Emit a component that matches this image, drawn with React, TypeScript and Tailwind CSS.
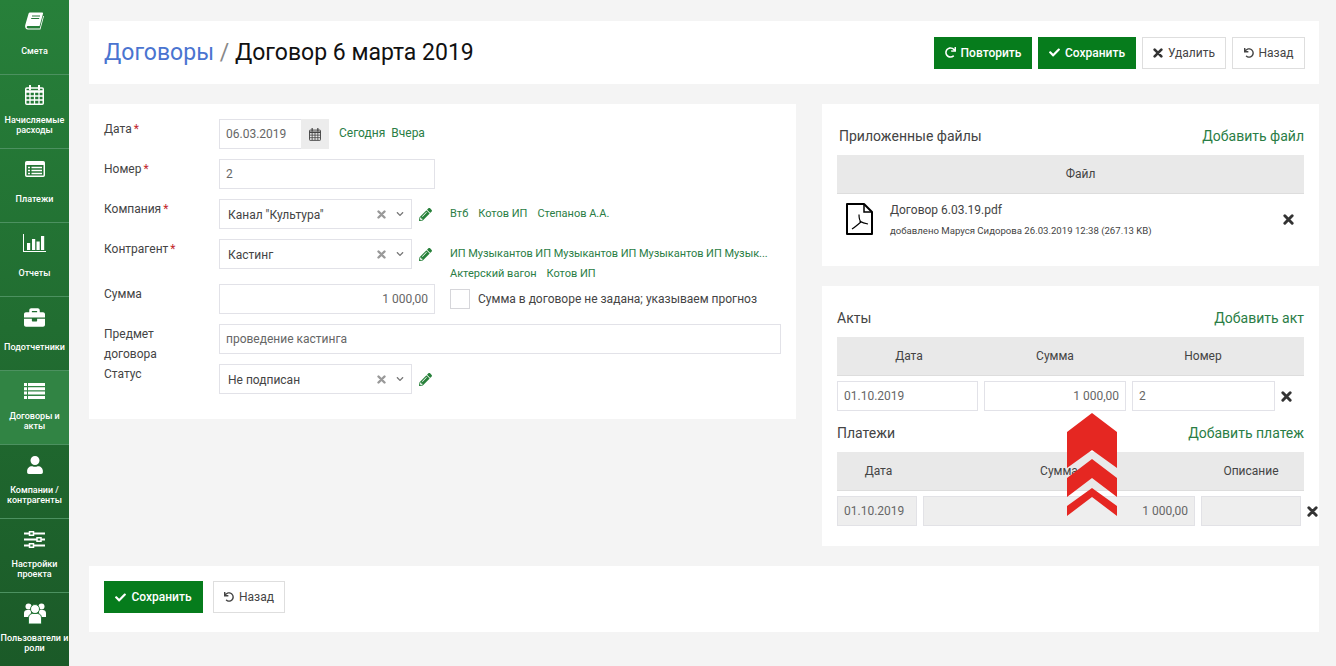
import React from 'react';
import { FaBriefcase, FaUser, FaRedo, FaCheck, FaUndo, FaPencilAlt, FaChevronDown } from 'react-icons/fa';

const GREEN = '#26783a';

function BookIcon() {
    return (
        <svg width="19" height="18" viewBox="0 0 19 18" fill="white">
            <path d="M5 0.5H17.2C18 0.5 18.2 1 18 1.8L14.6 14H3.2C1.2 14 1.2 16.4 3.2 16.4H14.8L18.2 4H19L15.4 17.6H3C0.4 17.6 -0.4 15 0.4 12.6L3.6 1.6C3.8 0.9 4.3 0.5 5 0.5Z" />
            <path d="M7 4H15M6.2 6.5H14.2" stroke={GREEN} strokeWidth="1" />
        </svg>
    );
}

function CalendarIcon({ size = 19, color = 'white' }: { size?: number; color?: string }) {
    return (
        <svg width={size} height={size + 1} viewBox="0 0 19 20" fill="none" stroke={color}>
            <rect x="0.75" y="3" width="17.5" height="16.25" rx="1" strokeWidth="1.5" />
            <path d="M0.5 6.5H18.5" strokeWidth="2.5" />
            <path d="M5 7V19M9.5 7V19M14 7V19M1 11H18M1 15H18" strokeWidth="1.3" />
            <path d="M5 0.5V4.5M14 0.5V4.5" strokeWidth="2" strokeLinecap="round" />
        </svg>
    );
}

function ListAltIcon() {
    return (
        <svg width="20" height="16" viewBox="0 0 20 16" fill="none" stroke="white">
            <rect x="0.75" y="0.75" width="18.5" height="14.5" rx="1" strokeWidth="1.5" />
            <path d="M1 2.5H19" strokeWidth="3" />
            <path d="M6.5 6.5H17M6.5 9.5H17M6.5 12.5H17M3 6.5H5M3 9.5H5M3 12.5H5" strokeWidth="1.4" />
        </svg>
    );
}

function ChartIcon() {
    return (
        <svg width="23" height="18" viewBox="0 0 23 18" fill="white">
            <path d="M0 0H1V17H23V18H0Z" />
            <rect x="4" y="9" width="3.2" height="7" />
            <rect x="9" y="5" width="3.2" height="11" />
            <rect x="13.5" y="7.5" width="3.2" height="8.5" />
            <rect x="18" y="2" width="3.2" height="14" />
        </svg>
    );
}

function ListIcon() {
    return (
        <svg width="21" height="16" viewBox="0 0 21 16" fill="white">
            <path d="M0 0H3V3H0ZM4 0H21V3H4ZM0 4.3H3V7.3H0ZM4 4.3H21V7.3H4ZM0 8.6H3V11.6H0ZM4 8.6H21V11.6H4ZM0 13H3V16H0ZM4 13H21V16H4Z" />
        </svg>
    );
}

function SlidersIcon() {
    return (
        <svg width="21" height="17" viewBox="0 0 21 17">
            <path d="M0 2.5H21M0 8.5H21M0 14.5H21" stroke="white" strokeWidth="2" />
            <rect x="5.5" y="0.75" width="4" height="3.5" fill={GREEN} stroke="white" strokeWidth="1.5" />
            <rect x="13" y="6.75" width="4" height="3.5" fill={GREEN} stroke="white" strokeWidth="1.5" />
            <rect x="5.5" y="12.75" width="4" height="3.5" fill={GREEN} stroke="white" strokeWidth="1.5" />
        </svg>
    );
}

function UsersIcon() {
    return (
        <svg width="22" height="21" viewBox="0 0 22 21" fill="white">
            <circle cx="4.5" cy="3.5" r="3" />
            <circle cx="17.5" cy="3.5" r="3" />
            <path d="M0 13V10C0 8 1.5 7 3 7H7V14H0ZM22 13V10C22 8 20.5 7 19 7H15V14H22Z" />
            <circle cx="11" cy="6" r="4.5" stroke={GREEN} strokeWidth="1" />
            <path d="M4.5 21V15C4.5 12 6.5 10.5 8.5 10.5H13.5C15.5 10.5 17.5 12 17.5 15V21Z" stroke={GREEN} strokeWidth="1" />
        </svg>
    );
}

function PdfIcon() {
    return (
        <svg width="27" height="32" viewBox="0 0 27 32" fill="none" stroke="black">
            <path d="M1 1H18L26 9V31H1Z" strokeWidth="2" strokeLinejoin="round" />
            <path d="M18 1V9H26" strokeWidth="1.5" />
            <path d="M13 11.5C13 15 14 18 15 19C13 20.5 9 24 6 26M13.5 18C16 19.5 19 20.5 22 21" strokeWidth="1.2" />
        </svg>
    );
}

function CrossIcon({ size = 11, color = '#333' }: { size?: number; color?: string }) {
    return (
        <svg width={size} height={size} viewBox="0 0 12 12" stroke={color} strokeWidth="3.2" strokeLinecap="round">
            <path d="M2 2L10 10M10 2L2 10" />
        </svg>
    );
}

const menu = [
    { icon: <BookIcon />, label: 'Смета' },
    { icon: <CalendarIcon />, label: 'Начисляемые расходы' },
    { icon: <ListAltIcon />, label: 'Платежи' },
    { icon: <ChartIcon />, label: 'Отчеты' },
    { icon: <FaBriefcase className="text-[21px]" />, label: 'Подотчетники' },
    { icon: <ListIcon />, label: 'Договоры и акты', active: true },
    { icon: <FaUser className="text-[18px]" />, label: 'Компании / контрагенты' },
    { icon: <SlidersIcon />, label: 'Настройки проекта' },
    { icon: <UsersIcon />, label: 'Пользователи и роли' },
];

function Sidebar() {
    return (
        <aside className="w-[69px] shrink-0 h-full pt-[1px] bg-gradient-to-b from-[#27803a] to-[#1b5a28] text-white">
            {menu.map((item) => (
                <div
                    key={item.label}
                    className={`h-[74px] border-b border-[#4c9160] flex flex-col items-center pt-[8px] ${item.active ? 'bg-[#318444]' : ''}`}
                >
                    <div className="h-[24px] flex items-center justify-center">{item.icon}</div>
                    <div className="h-[34px] mt-[1px] flex items-center justify-center text-center text-[9px] leading-[10px] font-medium -mx-[2px]">
                        {item.label}
                    </div>
                </div>
            ))}
        </aside>
    );
}

function Button({ icon, label, primary, className = '' }: { icon: React.ReactNode; label: string; primary?: boolean; className?: string }) {
    return (
        <button
            className={`h-[32px] flex items-center justify-center gap-[5px] text-[12px] ${primary ? 'bg-[#067c1c] text-white font-medium' : 'bg-white border border-[#dedede] text-[#444]'} ${className}`}
        >
            {icon}
            {label}
        </button>
    );
}

function Label({ text, required }: { text: React.ReactNode; required?: boolean }) {
    return (
        <div className="w-[115px] shrink-0 text-[12px] leading-[20px] text-[#444]">
            {text}
            {required && <span className="text-[#c2272d] ml-[2px]">*</span>}
        </div>
    );
}

function Field({ value, className = '', right, disabled }: { value?: string; className?: string; right?: boolean; disabled?: boolean }) {
    return (
        <div
            className={`h-[30px] border flex items-center px-[6px] text-[12px] text-[#666] ${disabled ? 'bg-[#eee] border-[#e2e2e6]' : 'bg-white border-[#e2e2e8]'} ${right ? 'justify-end' : ''} ${className}`}
        >
            {value}
        </div>
    );
}

function SelectBox({ value }: { value: string }) {
    return (
        <div className="flex items-center h-[30px]">
            <div className="w-[193px] h-[30px] border border-[#e2e2e8] flex items-center pl-[8px] text-[12px] text-[#444]">
                <span className="flex-1 pt-[1px]">{value}</span>
                <span className="mr-[10px]"><CrossIcon size={9} color="#999" /></span>
                <FaChevronDown className="text-[8px] text-[#777] mr-[7px]" />
            </div>
            <FaPencilAlt className="ml-[7px] text-[13px] text-[#27803a]" />
        </div>
    );
}

function Links({ items }: { items: string[] }) {
    return (
        <div className="flex gap-[10px] text-[11px] leading-[20px] text-[#2a7d45]">
            {items.map((t) => <span key={t}>{t}</span>)}
        </div>
    );
}

function MainForm() {
    return (
        <section className="w-[707px] h-[315px] bg-white pt-[15px] px-[15px]">
            <div className="flex h-[40px]">
                <Label text="Дата" required />
                <div className="flex h-[30px] items-center">
                    <div className="w-[82px] h-[30px] border border-r-0 border-[#e2e2e8] flex items-center px-[6px] text-[12px] text-[#666]">06.03.2019</div>
                    <div className="w-[28px] h-[30px] bg-[#ececec] flex items-center justify-center"><CalendarIcon size={12} color="#444" /></div>
                    <div className="ml-[10px] mb-[2px] flex gap-[6px] text-[12px] text-[#2a7d45]"><span>Сегодня</span><span>Вчера</span></div>
                </div>
            </div>
            <div className="flex h-[40px]">
                <Label text="Номер" required />
                <Field value="2" className="w-[216px]" />
            </div>
            <div className="flex h-[40px]">
                <Label text="Компания" required />
                <SelectBox value={'Канал "Культура"'} />
                <div className="ml-[18px] h-[30px] flex items-center"><Links items={['Втб', 'Котов ИП', 'Степанов А.А.']} /></div>
            </div>
            <div className="flex h-[45px]">
                <Label text="Контрагент" required />
                <SelectBox value="Кастинг" />
                <div className="ml-[18px] text-[11px] leading-[20px] text-[#2a7d45] pt-[5px]">
                    <div className="whitespace-nowrap tracking-[-0.004em]">ИП Музыкантов ИП Музыкантов ИП Музыкантов ИП Музык...</div>
                    <Links items={['Актерский вагон', 'Котов ИП']} />
                </div>
            </div>
            <div className="flex h-[40px]">
                <Label text="Сумма" />
                <Field value="1 000,00" right className="w-[216px]" />
                <div className="flex items-center h-[30px] ml-[15px]">
                    <div className="w-[20px] h-[20px] border border-[#d6d6da] mr-[8px]" />
                    <span className="text-[12px] text-[#444]">Сумма в договоре не задана; указываем прогноз</span>
                </div>
            </div>
            <div className="flex h-[40px]">
                <Label text={<>Предмет<br />договора</>} />
                <Field value="проведение кастинга" className="w-[562px]" />
            </div>
            <div className="flex h-[40px]">
                <Label text="Статус" />
                <SelectBox value="Не подписан" />
            </div>
        </section>
    );
}

function FilesPanel() {
    return (
        <section className="h-[162px] bg-white pl-[15px] pr-[15px] pt-[22px]">
            <div className="flex justify-between items-center h-[20px] pl-[2px] text-[14px]">
                <span className="text-[#444]">Приложенные файлы</span>
                <span className="text-[#2a7d45]">Добавить файл</span>
            </div>
            <div className="mt-[9px] h-[39px] pl-[20px] bg-[#e9e9e9] border-b border-[#ddd] flex items-center justify-center text-[12px] text-[#444]">Файл</div>
            <div className="flex items-center h-[50px] pl-[9px] pr-[10px]">
                <PdfIcon />
                <div className="ml-[17px] flex-1 pt-[2px]">
                    <div className="text-[12px] leading-[20px] text-[#444]">Договор 6.03.19.pdf</div>
                    <div className="text-[9.6px] leading-[20px] mt-[1px] text-[#444]">добавлено Маруся Сидорова 26.03.2019 12:38 (267.13 KB)</div>
                </div>
                <CrossIcon />
            </div>
        </section>
    );
}

function ActsPanel() {
    return (
        <section className="relative h-[260px] bg-white pl-[15px] pt-[22px]">
            <div className="w-[467px] flex justify-between items-center h-[20px] text-[14px]">
                <span className="text-[#444]">Акты</span>
                <span className="text-[#2a7d45]">Добавить акт</span>
            </div>
            <div className="w-[467px] mt-[9px] h-[39px] bg-[#e9e9e9] border-b border-[#ddd] flex items-center text-[12px] text-[#444]">
                <span className="w-[144px] text-center">Дата</span>
                <span className="w-[148px] text-center">Сумма</span>
                <span className="w-[148px] text-center">Номер</span>
            </div>
            <div className="flex items-center gap-[6px] mt-[5px]">
                <Field value="01.10.2019" className="w-[141px]" />
                <Field value="1 000,00" right className="w-[142px]" />
                <Field value="2" className="w-[143px]" />
                <CrossIcon />
            </div>
            <div className="w-[467px] flex justify-between items-center h-[20px] mt-[12px] text-[14px]">
                <span className="text-[#444]">Платежи</span>
                <span className="text-[#2a7d45]">Добавить платеж</span>
            </div>
            <div className="w-[467px] mt-[9px] h-[39px] bg-[#e9e9e9] border-b border-[#ddd] flex items-center text-[12px] text-[#444]">
                <span className="w-[83px] text-center">Дата</span>
                <span className="w-[278px] text-center">Сумма</span>
                <span className="w-[106px] text-center">Описание</span>
            </div>
            <div className="flex items-center gap-[6px] mt-[5px]">
                <Field disabled value="01.10.2019" className="w-[80px]" />
                <Field disabled value="1 000,00" right className="w-[272px]" />
                <Field disabled className="w-[100px]" />
                <CrossIcon />
            </div>
            <svg className="absolute left-[245px] top-[127px] w-[50px] h-[103px]" viewBox="0 0 50 103" fill="#e52722">
                <path d="M25 0L50 19V55L25 37L0 55V19Z" />
                <path d="M25 46L50 65V84L25 65L0 84V65Z" />
                <path d="M25 75L50 93V103L25 84L0 103V93Z" />
            </svg>
        </section>
    );
}

export default function App() {
    return (
        <div className="flex h-screen overflow-hidden bg-[#f4f4f4] font-['Roboto',sans-serif]">
            <Sidebar />
            <main className="flex-1 pl-[20px] pr-[17px] pt-[21px]">
                <header className="h-[63px] bg-white flex items-center justify-between pl-[15px] pr-[14px]">
                    <h1 className="text-[23px] pt-[2px] text-[#111]">
                        <span className="text-[#4a74d0]">Договоры</span>
                        <span className="text-[#888]"> / </span>
                        Договор 6 марта 2019
                    </h1>
                    <div className="flex gap-[6px]">
                        <Button primary className="w-[98px]" icon={<FaRedo className="text-[11px]" />} label="Повторить" />
                        <Button primary className="w-[98px]" icon={<FaCheck className="text-[11px]" />} label="Сохранить" />
                        <Button className="w-[84px]" icon={<CrossIcon size={10} />} label="Удалить" />
                        <Button className="w-[73px]" icon={<FaUndo className="text-[10px]" />} label="Назад" />
                    </div>
                </header>
                <div className="flex gap-[26px] mt-[20px]">
                    <MainForm />
                    <div className="flex-1 flex flex-col gap-[20px]">
                        <FilesPanel />
                        <ActsPanel />
                    </div>
                </div>
                <footer className="h-[66px] bg-white mt-[20px] flex items-start gap-[10px] pl-[15px] pt-[15px]">
                    <Button primary className="w-[99px]" icon={<FaCheck className="text-[11px]" />} label="Сохранить" />
                    <Button className="w-[72px]" icon={<FaUndo className="text-[10px]" />} label="Назад" />
                </footer>
            </main>
        </div>
    );
}
